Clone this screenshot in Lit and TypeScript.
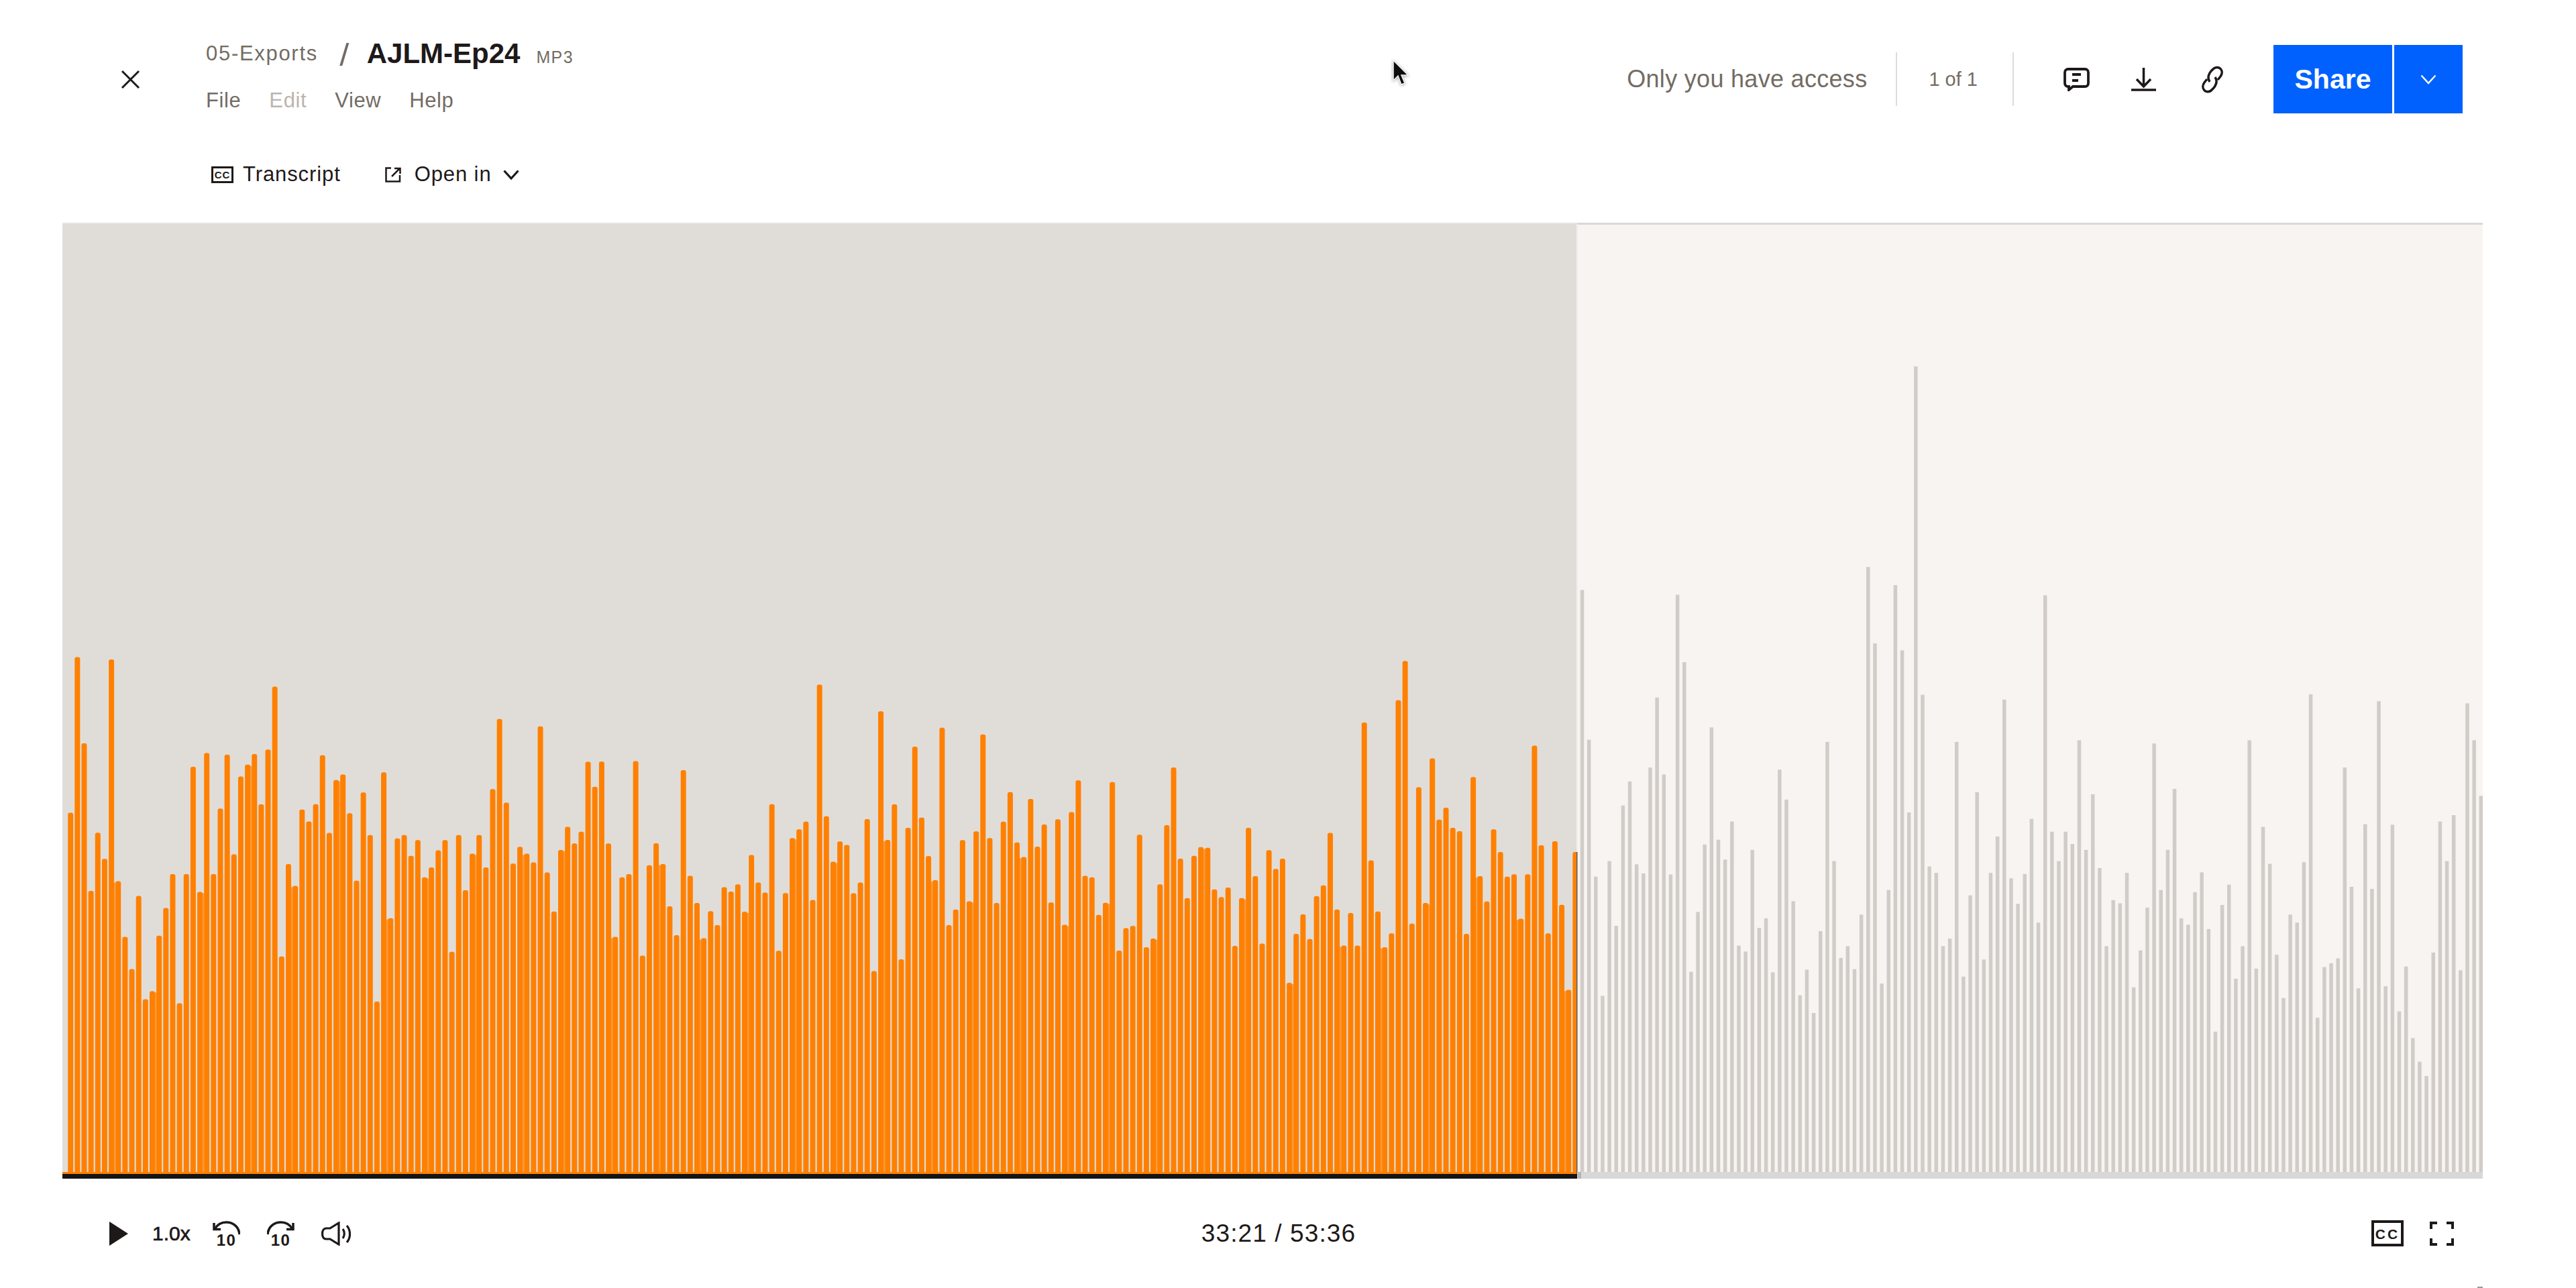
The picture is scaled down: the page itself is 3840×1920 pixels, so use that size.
import { LitElement, html, css, svg } from "lit";
import { customElement } from "lit/decorators.js";

const L = [683,77,413,988,761,863,86,950,1167,1292,1007,1410,1378,1162,1054,922,1425,922,504,992,451,922,667,457,845,542,496,455,651,437,192,1243,883,968,671,717,650,459,762,556,534,685,948,604,770,1419,526,1094,783,770,851,790,935,896,830,790,1225,770,985,843,770,896,591,318,644,881,816,843,877,347,916,1068,828,738,
803,757,485,582,484,803,1167,935,922,482,1240,888,802,883,1048,1160,517,929,1035,1172,1067,1121,973,990,962,1069,848,955,994,650,1221,996,782,748,718,1023,184,697,874,795,809,997,955,708,1300,288,789,651,1254,742,426,702,852,946,352,1121,1060,790,1028,756,378,782,1035,718,603,799,856,630,815,729,1033,709,1120,681,557,
929,935,1081,1034,564,1220,1133,1124,769,1207,1173,962,732,507,862,1016,851,817,820,982,1012,975,1202,1016,742,930,1193,829,902,862,1346,1155,1079,1175,1008,966,762,1060,1201,1074,1201,332,869,1068,1207,1153,245,92,1115,584,1035,472,710,664,742,755,1155,544,930,1029,748,836,932,923,1096,923,422,810,1153,794,1042,1373,836];
const R = [476,756,1012,1235,983,1104,879,834,989,1006,808,677,821,1008,485,611,1190,1078,952,733,943,980,909,1141,1152,962,1108,1090,1191,812,868,1058,1234,1186,1267,1114,760,983,1164,1142,1185,1083,433,576,1212,1037,467,589,892,58,672,993,1005,1142,1128,760,1199,1047,854,1167,1005,937,681,1015,1063,1007,904,
1098,486,928,983,928,951,757,962,858,996,1142,1056,1062,1005,1219,1150,1070,763,1037,962,848,1090,1102,1041,1004,1110,1302,1065,1027,1203,1142,757,1184,919,988,1158,1239,1083,1098,985,671,1276,1181,1174,1165,808,1031,1221,914,1035,684,1217,915,1264,1180,1314,1358,1385,1154,909,983,897,1187,688,757,861];

const PITCH = 10.15;
const X0 = 105.2;
const topL = (v: number) => 950 + v / 2.613;
const topR = (v: number) => 500 + v / 1.2544;

const chevron = (cls: string) => html`<svg class=${cls} viewBox="0 0 24 15"><path d="M1.5 1.5 12 13 22.5 1.5"/></svg>`;

@customElement("app-root")
export class AppRoot extends LitElement {
  static styles = css`
    :host { display: block; position: relative; width: 100%; min-height: 100vh; background: #fff; color: #1e1919;
      font-family: "Liberation Sans", Arial, sans-serif; overflow: hidden; }
    svg { display: block; flex: none; }
    .line { fill: none; stroke: #1e1919; }
    header { height: 332px; box-sizing: border-box; padding: 0 169px 0 180px; display: grid;
      grid-template-columns: 127px 1fr auto; grid-template-rows: 210px 122px; }
    .close { width: 29px; height: 29px; margin-top: 104px; }
    .close path { fill: none; stroke: #1e1919; stroke-width: 3; }
    .titles { padding-top: 55px; }
    .crumbs { display: flex; align-items: center; height: 50px; }
    .crumb { font-size: 31px; letter-spacing: 1.7px; color: #736c64; }
    .slash { font-size: 46px; color: #736c64; font-weight: 400; margin: 4px 27px 0 33px; line-height: 50px; transform: scaleX(1.1); }
    .name { font-size: 42px; font-weight: 700; line-height: 50px; }
    .ext { font-size: 25px; letter-spacing: 1.4px; color: #736c64; margin: 10px 0 0 24px; }
    .menu { display: flex; gap: 42px; margin-top: 25px; font-size: 31px; letter-spacing: .6px; line-height: 40px; color: #736c64; }
    .menu .off { color: #bbb5ae; }
    .right { display: flex; align-items: center; height: 102px; margin-top: 67px; }
    .access { font-size: 36px; letter-spacing: .3px; color: #736c64; margin-right: 43px; }
    .div { width: 2px; height: 80px; background: #dfdbd6; }
    .count { font-size: 29px; color: #736c64; margin: 0 52px 0 47px; }
    .comment { width: 39px; height: 35px; margin-left: 74px; }
    .download { width: 37px; height: 35px; margin-left: 62px; }
    .link { width: 32px; height: 41px; margin-left: 68px; margin-right: 75px; }
    .right .line, .tools .line { stroke-width: 3.5; }
    .right .comment .line { stroke-width: 3.8; }
    .share { width: 177px; height: 102px; background: #0061fe; color: #fff; font-size: 41px; font-weight: 700;
      display: flex; align-items: center; justify-content: center; }
    .more { width: 102px; height: 102px; margin-left: 3px; background: #0061fe; display: flex; align-items: center; justify-content: center; }
    .chev-w { width: 24px; height: 15px; }
    .chev-w path { fill: none; stroke: #fff; stroke-width: 2.5; }
    .chev-d { width: 24px; height: 15px; margin-left: 17px; }
    .chev-d path { fill: none; stroke: #1e1919; stroke-width: 3.2; }
    .tools { grid-column: 2; grid-row: 2; display: flex; align-items: center; height: 100px; padding-left: 8px;
      font-size: 31px; letter-spacing: .9px; }
    .cc-s { width: 33px; height: 25px; margin-right: 14px; }
    .open-i { width: 24px; height: 23px; margin: 0 20px 0 66px; }
    .tools .open-i .line { stroke-width: 2.5; }
    .wave { display: block; margin-left: 93px; width: 3608px; height: 1425px; }
    .bg-l { fill: #e0ddd8; } .bg-r { fill: #f7f4f1; } .top-l { fill: #e6e4e0; } .top-r { fill: #d9d9d9; }
    .bar-l { fill: #ff8000; } .fill-l { fill: #ff8000; opacity: .72; }
    .bar-r { fill: #d1ccc8; }
    .t-l { fill: #141414; } .t-r { fill: #d8d8d8; } .t-h { fill: #b7b5b3; }
    .edge { fill: #5b5b5b; } .split { fill: #f1efec; }
    footer { height: 163px; box-sizing: border-box; padding: 0 182px 0 163px; display: flex; align-items: center; }
    .side { flex: 1; display: flex; align-items: center; }
    .side.end { justify-content: flex-end; }
    .play { width: 28px; height: 36px; }
    .play path { fill: #1e1919; }
    .speed { font-size: 30px; -webkit-text-stroke: .7px #1e1919; margin: 0 33px 0 36px; }
    .skip { width: 41px; height: 45px; margin: 0 40px -8px 0; }
    .skip .line { stroke-width: 3.5; }
    .skip text { font-size: 24px; font-weight: 700; letter-spacing: 1.5px; text-anchor: middle; fill: #1e1919; font-family: "Liberation Sans", sans-serif; }
    .vol { width: 44px; height: 36px; }
    .vol .line { stroke-width: 3.2; }
    .time { font-size: 37px; letter-spacing: 1.1px; margin-right: 9px; }
    .cc-b { width: 48px; height: 39px; margin-right: 39px; }
    .cc-t { font-weight: 700; fill: #1e1919; text-anchor: middle; font-family: "Liberation Sans", sans-serif; }
    .cc-r { fill: none; stroke: #1e1919; }
    .full { width: 36px; height: 36px; }
    .full .line { stroke-width: 4; }
    .cursor { position: absolute; left: 2075px; top: 88px; width: 28px; height: 44px; overflow: visible; }
    .cursor path { fill: #0c0c0c; stroke: #f2f2f2; stroke-width: 1.5; filter: drop-shadow(0 1px 2px rgba(0,0,0,.35)); }
    .corner { position: absolute; left: 3693px; top: 1918px; width: 8px; height: 2px; background: #9a9a9a; }
  `;

  private wave() {
    const bars = L.map((v, i) => {
      const x = X0 + PITCH * i - 4;
      const y = topL(v);
      return svg`<rect class="bar-l" x=${x.toFixed(2)} y=${y.toFixed(1)} width="8" height=${(1752 - y).toFixed(1)} rx="3"></rect>`;
    });
    const fills = L.slice(0, -1).map((v, g) => {
      const f = (((g + 1) * 15 + 5) % 100) / 100;
      if (f >= 0.15) return null;
      const y = Math.max(topL(v), topL(L[g + 1])) + 2;
      const x = X0 + PITCH * g + 4;
      return svg`<rect class="fill-l" x=${x.toFixed(2)} y=${y.toFixed(1)} width="2.2" height=${(1750 - y).toFixed(1)}></rect>`;
    });
    const rbars = R.map((v, i) => {
      const x = X0 + PITCH * (i + 222) - 2.75;
      const y = topR(v);
      return svg`<rect class="bar-r" x=${x.toFixed(2)} y=${y.toFixed(1)} width="5.5" height=${(1748 - y).toFixed(1)}></rect>`;
    });
    return html`<svg class="wave" viewBox="93 332 3608 1425">
      <rect class="bg-l" x="93" y="332" width="2258" height="1420"></rect>
      <rect class="top-l" x="93" y="332" width="2258" height="2"></rect>
      ${bars}${fills}
      <rect class="bg-r" x="2351" y="332" width="1350" height="1420"></rect>
      <rect class="top-r" x="2351" y="332" width="1350" height="3"></rect>
      ${rbars}
      <rect class="split" x="2350" y="334" width="2" height="936"></rect>
      <rect class="edge" x="2350" y="1270" width="1.5" height="487"></rect>
      <rect class="bar-l" x="93" y="1747" width="2257" height="3"></rect>
      <rect class="t-l" x="93" y="1750" width="2258" height="7"></rect>
      <rect class="t-r" x="2351" y="1747" width="1350" height="10"></rect>
      <rect class="t-h" x="2352" y="1747" width="5" height="10"></rect>
    </svg>`;
  }

  render() {
    return html`
      <header>
        <svg class="close" viewBox="0 0 29 29"><path d="M2 2 27 27M27 2 2 27"/></svg>
        <div class="titles">
          <div class="crumbs">
            <span class="crumb">05-Exports</span><span class="slash">/</span><span class="name">AJLM-Ep24</span><span class="ext">MP3</span>
          </div>
          <div class="menu"><span>File</span><span class="off">Edit</span><span>View</span><span>Help</span></div>
        </div>
        <div class="right">
          <span class="access">Only you have access</span>
          <span class="div"></span>
          <span class="count">1 of 1</span>
          <span class="div"></span>
          <svg class="comment" viewBox="0 0 39 35">
            <path class="line" d="M7 2H32C35 2 37 4 37 7V23C37 26 35 28 32 28H14L8 33V28H7C4 28 2 26 2 23V7C2 4 4 2 7 2Z"/>
            <path class="line" d="M13 10H26M13 19H22"/>
          </svg>
          <svg class="download" viewBox="0 0 37 35">
            <path class="line" d="M18.5 0V27M8 17 18.5 28 29 17"/>
            <path class="line" d="M0 33H37"/>
          </svg>
          <svg class="link" viewBox="0 0 32 41">
            <path class="line" d="M12 24C8 18 10 13 14 8L17 5C20 1.5 26 1.5 28.5 5C31 8 30.5 12.5 28 16L24 21"/>
            <path class="line" d="M20 17C24 23 22 28 18 33L15 36C12 39.5 6 39.5 3.5 36C1 33 1.5 28.5 4 25L8 20"/>
          </svg>
          <div class="share">Share</div>
          <div class="more">${chevron("chev-w")}</div>
        </div>
        <div class="tools">
          <svg class="cc-s" viewBox="0 0 33 25">
            <rect class="cc-r" x="1.5" y="1.5" width="30" height="22" stroke-width="3"></rect>
            <text class="cc-t" x="16.5" y="18" font-size="15" letter-spacing="1">CC</text>
          </svg>
          <span>Transcript</span>
          <svg class="open-i" viewBox="0 0 24 23">
            <path class="line" d="M9 1.5H1.5V21.5H22V12"/>
            <path class="line" d="M10 14 21 3M14 2H22.5V10"/>
          </svg>
          <span>Open in</span>
          ${chevron("chev-d")}
        </div>
      </header>
      ${this.wave()}
      <footer>
        <div class="side">
          <svg class="play" viewBox="0 0 28 36"><path d="M0 0 28 18 0 36Z"/></svg>
          <span class="speed">1.0x</span>
          <svg class="skip" viewBox="0 0 41 45">
            <path class="line" d="M3 12C8 4 14 2 20 2C31 2 39 9 40 20"/>
            <path class="line" d="M2 3V12.5H12"/>
            <text x="20.5" y="37">10</text>
          </svg>
          <svg class="skip" viewBox="0 0 41 45">
            <path class="line" d="M38 12C33 4 27 2 21 2C10 2 2 9 1 20"/>
            <path class="line" d="M39 3V12.5H29"/>
            <text x="20.5" y="37">10</text>
          </svg>
          <svg class="vol" viewBox="0 0 44 36">
            <path class="line" d="M26 2V34L13 26H7C3 26 1.5 22 1.5 18C1.5 14 3.5 10 7.5 10H13Z"/>
            <path class="line" d="M32 11C35 15 35 21 32 25M38 6C44 13 44 24 38 31"/>
          </svg>
        </div>
        <div class="time">33:21 / 53:36</div>
        <div class="side end">
          <svg class="cc-b" viewBox="0 0 48 39">
            <rect class="cc-r" x="2" y="2" width="44" height="35" stroke-width="4"></rect>
            <text class="cc-t" x="24" y="27.5" font-size="21" letter-spacing="3">CC</text>
          </svg>
          <svg class="full" viewBox="0 0 36 36">
            <path class="line" d="M2 11V2H11M25 2H34V11M34 25V34H25M11 34H2V25"/>
          </svg>
        </div>
      </footer>
      <svg class="cursor" viewBox="0 0 28 44"><path d="M2 2V32L9 25 14 38 19 36 14 24H24Z"/></svg>
      <div class="corner"></div>
    `;
  }
}
